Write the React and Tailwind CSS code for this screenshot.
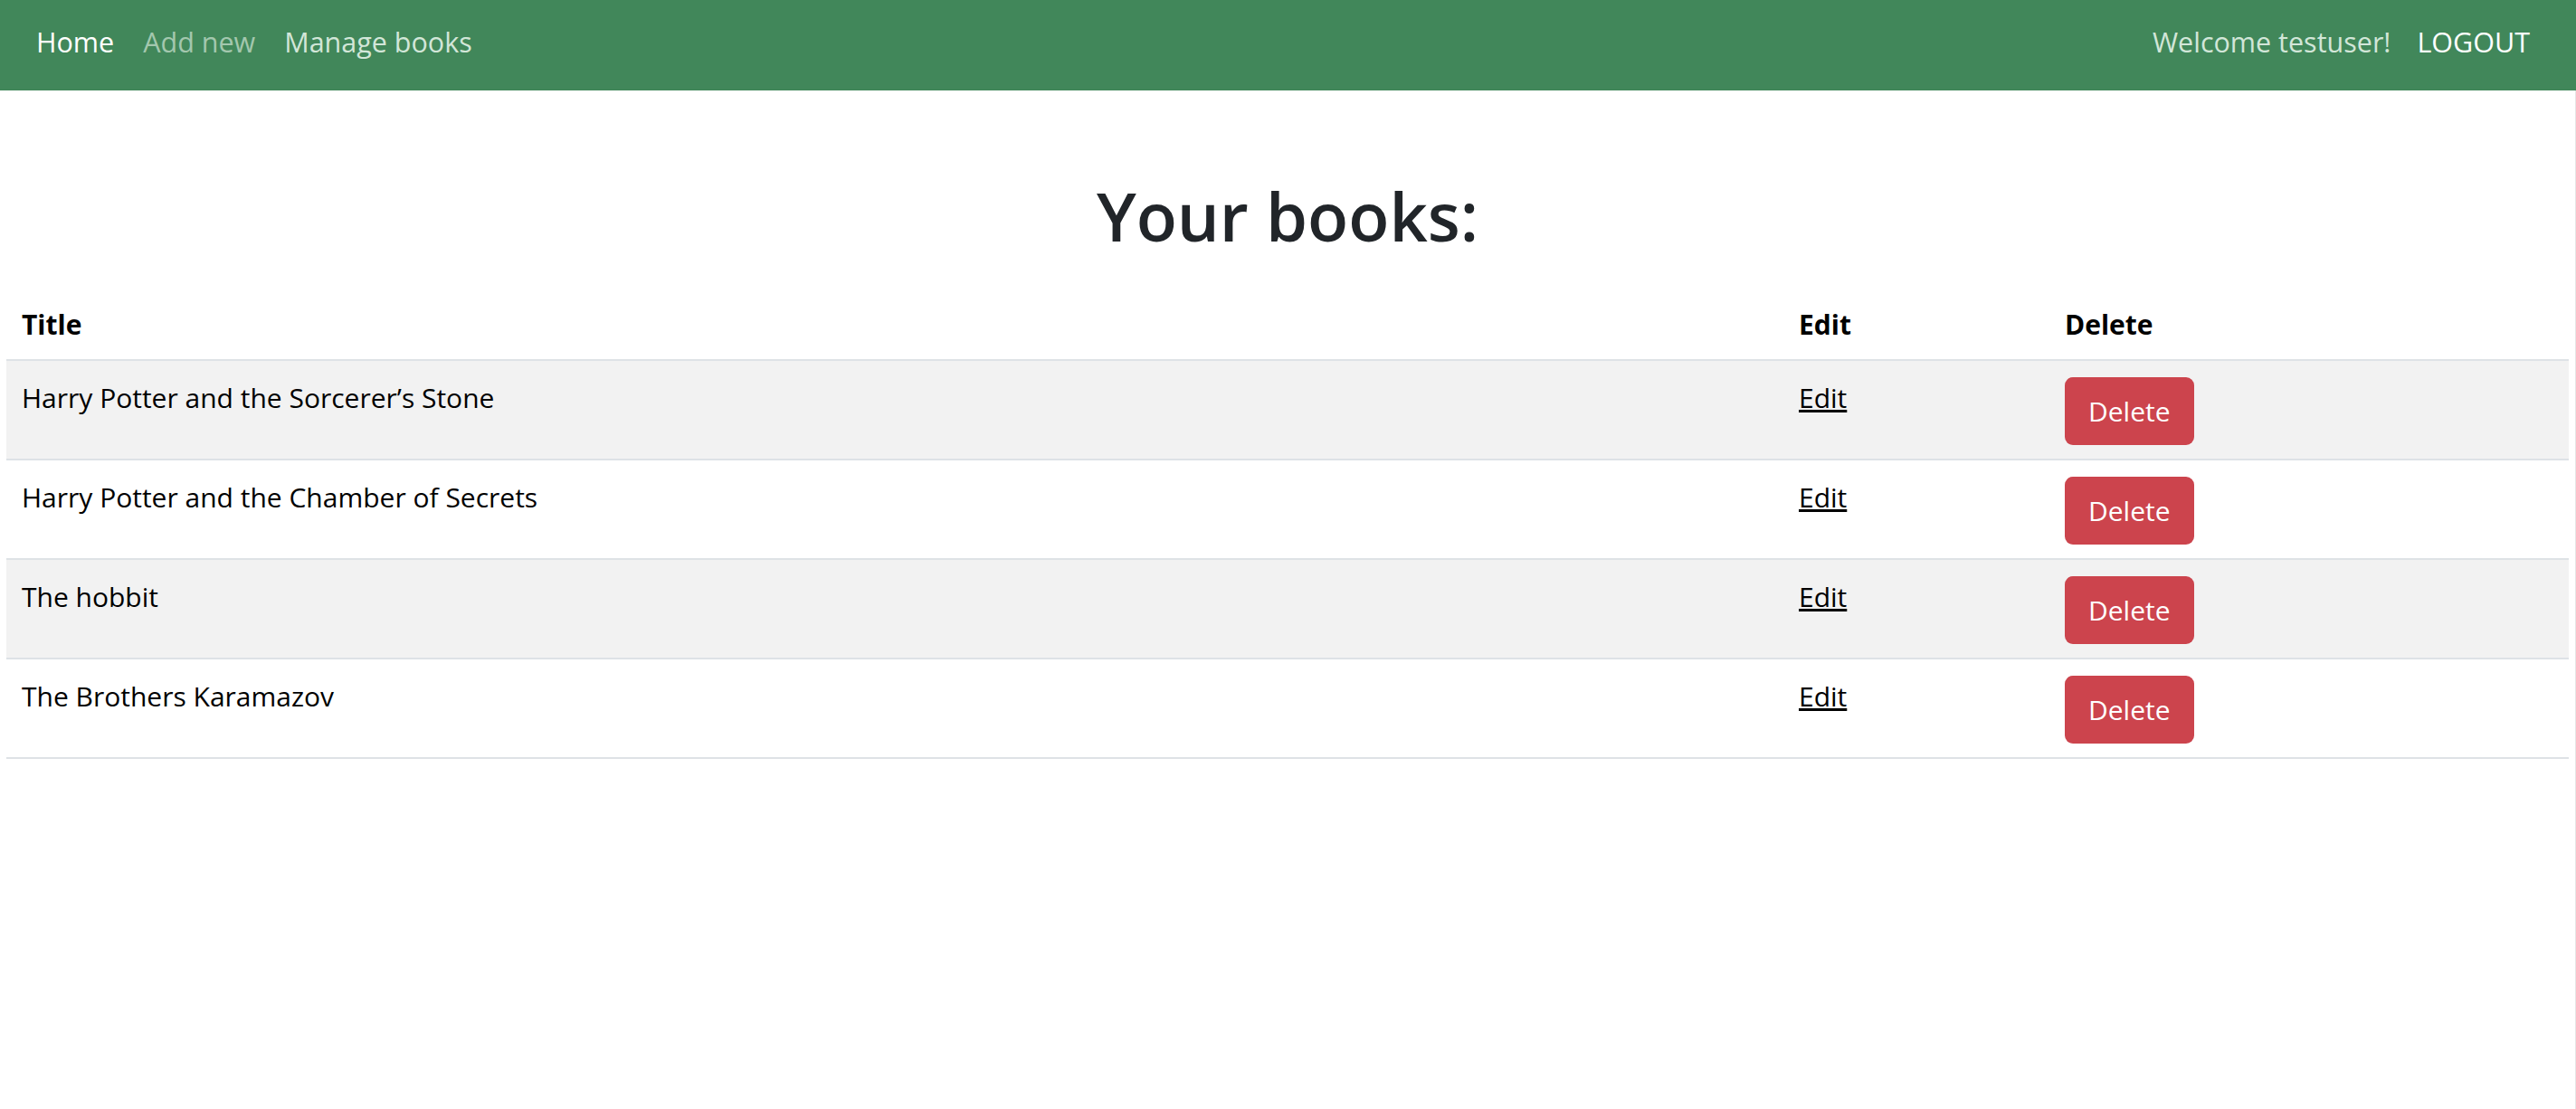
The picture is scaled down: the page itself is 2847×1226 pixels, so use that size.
import React from 'react';

const books = [
  'Harry Potter and the Sorcerer\u2019s Stone',
  'Harry Potter and the Chamber of Secrets',
  'The hobbit',
  'The Brothers Karamazov',
];

const Navbar = () => (
  <nav className="h-[100px] bg-[#41875a] flex items-center justify-between pl-[24px] pr-[35px] pb-[6px] text-[30.5px]">
    <div className="flex items-center">
      <a className="px-[16px] text-white">Home</a>
      <a className="px-[16px] text-[#a3c7ae]">Add new</a>
      <a className="px-[16px] text-[#d2e6d8]">Manage books</a>
    </div>
    <div className="flex items-center">
      <span className="px-[13px] text-[#d2e6d8]">Welcome testuser!</span>
      <a className="px-[16px] text-white">LOGOUT</a>
    </div>
  </nav>
);

const App = () => {
  return (
    <div className="min-h-[1226px] bg-white text-[30px] leading-[1.5] text-black font-['Open_Sans',sans-serif]">
      <Navbar />
      <main className="px-[7px] border-r border-[#e6e6e6] min-h-[1126px]">
        <h1 className="text-center text-[#212529] text-[74px] leading-[1.2] font-semibold pt-[95px] pb-[40px]">
          Your books:
        </h1>
        <table className="w-full border-collapse">
          <thead>
            <tr className="border-b-2 border-[#dee2e6]">
              <th className="w-[1964px] text-left font-bold px-[17px] pt-[12px] pb-[16px]">Title</th>
              <th className="w-[294px] text-left font-bold px-[17px] pt-[12px] pb-[16px]">Edit</th>
              <th className="text-left font-bold px-[17px] pt-[12px] pb-[16px]">Delete</th>
            </tr>
          </thead>
          <tbody>
            {books.map((title, i) => (
              <tr key={i} className={`border-b-2 border-[#dee2e6] ${i % 2 === 0 ? 'bg-[#f2f2f2]' : 'bg-white'}`}>
                <td className="align-top px-[17px] pt-[18px] h-[110px]">{title}</td>
                <td className="align-top px-[17px] pt-[18px]">
                  <a className="underline">Edit</a>
                </td>
                <td className="align-top px-[17px] pt-[18px]">
                  <button className="h-[75px] px-[26px] rounded-[9px] bg-[#cc444d] text-white">Delete</button>
                </td>
              </tr>
            ))}
          </tbody>
        </table>
      </main>
    </div>
  );
};

export default App;
